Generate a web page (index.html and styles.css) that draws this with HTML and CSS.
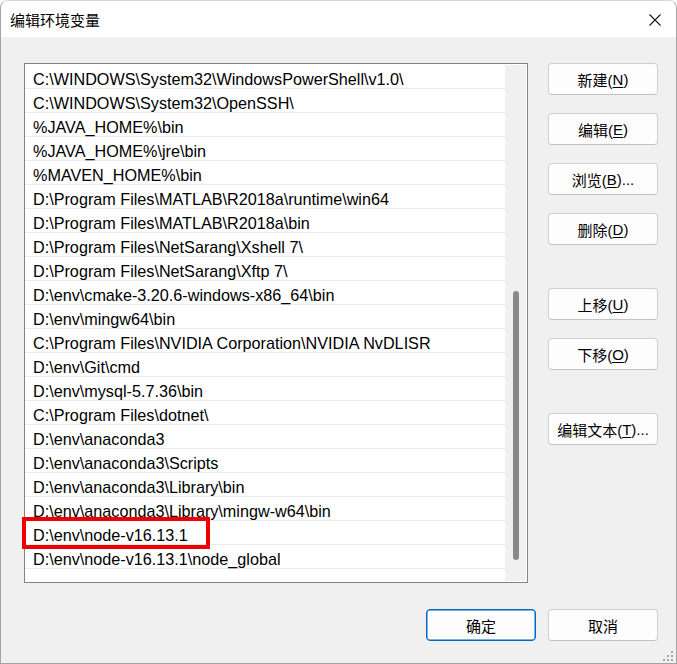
FILE: index.html
```html
<!DOCTYPE html>
<html lang="zh-CN">
<head>
  <meta charset="UTF-8" />
  <meta name="viewport" content="width=device-width, initial-scale=1.0"/>
  <title>编辑环境变量</title>
  <link rel="stylesheet" href="styles.css">
</head>
<body>
  <div class="window">
    <header class="titlebar">
      <span class="title">编辑环境变量</span>
      <svg class="close" width="12" height="12" viewBox="0 0 12 12">
        <path d="M0.5 0.5 L11.5 11.5 M11.5 0.5 L0.5 11.5" stroke="#1b1b1b" stroke-width="1.1" fill="none"/>
      </svg>
    </header>

    <section class="content">
      <div class="main">
        <div class="list">
          <div class="rows">
            <div class="row">C:\WINDOWS\System32\WindowsPowerShell\v1.0\</div>
            <div class="row">C:\WINDOWS\System32\OpenSSH\</div>
            <div class="row">%JAVA_HOME%\bin</div>
            <div class="row">%JAVA_HOME%\jre\bin</div>
            <div class="row">%MAVEN_HOME%\bin</div>
            <div class="row">D:\Program Files\MATLAB\R2018a\runtime\win64</div>
            <div class="row">D:\Program Files\MATLAB\R2018a\bin</div>
            <div class="row">D:\Program Files\NetSarang\Xshell 7\</div>
            <div class="row">D:\Program Files\NetSarang\Xftp 7\</div>
            <div class="row">D:\env\cmake-3.20.6-windows-x86_64\bin</div>
            <div class="row">D:\env\mingw64\bin</div>
            <div class="row">C:\Program Files\NVIDIA Corporation\NVIDIA NvDLISR</div>
            <div class="row">D:\env\Git\cmd</div>
            <div class="row">D:\env\mysql-5.7.36\bin</div>
            <div class="row">C:\Program Files\dotnet\</div>
            <div class="row">D:\env\anaconda3</div>
            <div class="row">D:\env\anaconda3\Scripts</div>
            <div class="row">D:\env\anaconda3\Library\bin</div>
            <div class="row">D:\env\anaconda3\Library\mingw-w64\bin</div>
            <div class="row marked">D:\env\node-v16.13.1<span class="mark"></span></div>
            <div class="row">D:\env\node-v16.13.1\node_global</div>
          </div>
          <div class="scrollbar"><div class="thumb"></div></div>
        </div>

        <div class="side-buttons">
          <button class="btn">新建(<u>N</u>)</button>
          <button class="btn">编辑(<u>E</u>)</button>
          <button class="btn">浏览(<u>B</u>)...</button>
          <button class="btn">删除(<u>D</u>)</button>
          <button class="btn group">上移(<u>U</u>)</button>
          <button class="btn">下移(<u>O</u>)</button>
          <button class="btn group">编辑文本(<u>T</u>)...</button>
        </div>
      </div>

      <div class="footer">
        <button class="btn default">确定</button>
        <button class="btn">取消</button>
      </div>
    </section>

    <svg class="grip" width="10" height="10" viewBox="0 0 10 10">
      <rect x="8" y="0" width="2" height="2" fill="#a8a8a8"/>
      <rect x="4" y="4" width="2" height="2" fill="#a8a8a8"/>
      <rect x="8" y="4" width="2" height="2" fill="#a8a8a8"/>
      <rect x="0" y="8" width="2" height="2" fill="#a8a8a8"/>
      <rect x="4" y="8" width="2" height="2" fill="#a8a8a8"/>
      <rect x="8" y="8" width="2" height="2" fill="#a8a8a8"/>
    </svg>
  </div>
</body>
</html>
```

FILE: styles.css
```css
html, body { margin:0; padding:0; background:#fff; }
body { font-family:"Liberation Sans","Noto Sans CJK SC",sans-serif; color:#000; }

.window { position:relative; box-sizing:border-box; width:677px; height:664px; background:#f0f0f0; border:1px solid #a3a3a3; border-top-color:#d6d6d6; border-radius:8px 8px 0 0; overflow:hidden; }

.titlebar { height:36px; background:#fff; display:flex; align-items:center; justify-content:space-between; padding:0 15px 0 9px; }
.title { font-family:"Noto Sans CJK SC",sans-serif; font-size:15px; line-height:20px; margin-top:2px; }
.close { display:block; margin-top:1px; }

.content { padding:26px 18px 0 23px; }
.main { display:flex; gap:20px; }

.list { box-sizing:border-box; width:504px; height:520px; border:1px solid #838383; background:#fff; padding:1px 1px 1px 0; display:flex; }
.rows { flex:1; }
.row { position:relative; height:18px; padding:5px 0 0 8px; line-height:18px; font-size:16.2px; border-bottom:1px solid #ebebeb; white-space:nowrap; }
.mark { position:absolute; left:-3px; top:-4px; width:188px; height:32px; box-sizing:border-box; border:4px solid #ee0000; }

.scrollbar { width:21px; background:#f0f0f0; }
.thumb { width:6px; height:269px; margin:226px 0 0 8px; background:#898989; border-radius:3px; }

.side-buttons { display:flex; flex-direction:column; gap:18px; }

.btn { box-sizing:border-box; width:110px; height:32px; background:#fdfdfd; border:1px solid #d0d0d0; border-bottom-color:#c2c2c2; border-radius:4px; font-family:"Liberation Sans","Noto Sans CJK SC",sans-serif; font-size:15px; color:#000; padding:0; display:flex; align-items:center; justify-content:center; }
.btn u { text-underline-offset:2px; }
.btn.group { margin-top:25px; }
.btn.default { border:1px solid #0067c0; box-shadow:inset 0 0 0 0.5px #0067c0; }

.footer { display:flex; justify-content:flex-end; gap:12px; margin-top:26px; }

.grip { position:absolute; right:3px; bottom:2px; }
```
